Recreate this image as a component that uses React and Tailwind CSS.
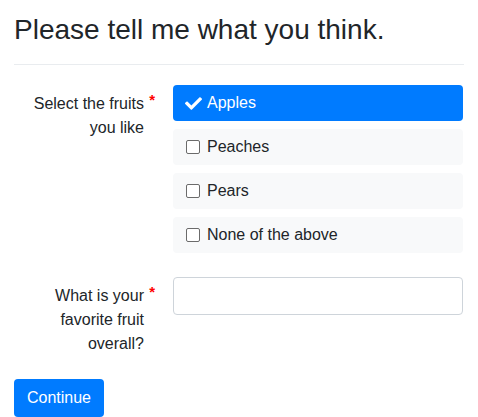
import React from "react";

const font = { fontFamily: '"Liberation Sans", Arial, sans-serif' };

function Check() {
  return (
    <svg width="17" height="17" viewBox="0 0 512 512" className="shrink-0" fill="#fff">
      <path d="M173.898 439.404l-166.4-166.4c-9.997-9.997-9.997-26.206 0-36.204l36.203-36.204c9.997-9.998 26.207-9.998 36.204 0L192 312.69 432.095 72.596c9.997-9.997 26.207-9.997 36.204 0l36.203 36.204c9.997 9.997 9.997 26.206 0 36.204l-294.4 294.401c-9.998 9.997-26.207 9.997-36.204-.001z" />
    </svg>
  );
}

function Option({ label, checked }) {
  if (checked) {
    return (
      <div className="h-[36px] mb-2 rounded-[4px] bg-[#007bff] text-white flex items-center pl-[12px] gap-[5px] text-[16px]">
        <Check />
        <span>{label}</span>
      </div>
    );
  }
  return (
    <div className="h-[36px] mb-2 rounded-[4px] bg-[#f8f9fa] text-[#212529] flex items-center pl-[13px] gap-[7px] text-[16px]">
      <span className="w-[14px] h-[14px] border border-[#6b6b6b] rounded-[2px] bg-white shrink-0" />
      <span>{label}</span>
    </div>
  );
}

function Label({ lines }) {
  return (
    <div className="w-[130px] shrink-0 text-right pt-[7px] pb-[7px] leading-[24px] text-[16px] text-[#212529]">
      <span className="relative inline-block">
        {lines.map((l, i) => (
          <div key={i}>{l}</div>
        ))}
        <span className="absolute right-[-11px] top-[0px] text-[15px] leading-[15px] font-bold text-[#ff0000]">*</span>
      </span>
    </div>
  );
}

export default function App() {
  return (
    <div className="w-[478px] h-[417px] overflow-hidden bg-white pl-[14px] pr-[15px]" style={font}>
      <h3 className="pt-[13px] text-[28px] leading-[34px] text-[#212529] m-0">Please tell me what you think.</h3>
      <div className="mt-[17px] h-px bg-[#e9ecef] mr-[-1px]" />
      <div className="mt-[20px] flex mb-4">
        <Label lines={["Select the fruits", "you like"]} />
        <div className="flex-1 ml-[29px]">
          <Option label="Apples" checked />
          <Option label="Peaches" />
          <Option label="Pears" />
          <Option label="None of the above" />
        </div>
      </div>
      <div className="flex mb-4">
        <Label lines={["What is your", "favorite fruit", "overall?"]} />
        <div className="flex-1 ml-[29px]">
          <input className="w-full h-[38px] border border-[#ced4da] rounded-[4px] px-3 outline-none" />
        </div>
      </div>
      <button className="h-[38px] px-[12px] w-[90px] rounded-[4px] bg-[#007bff] text-white text-[16px]">Continue</button>
    </div>
  );
}
